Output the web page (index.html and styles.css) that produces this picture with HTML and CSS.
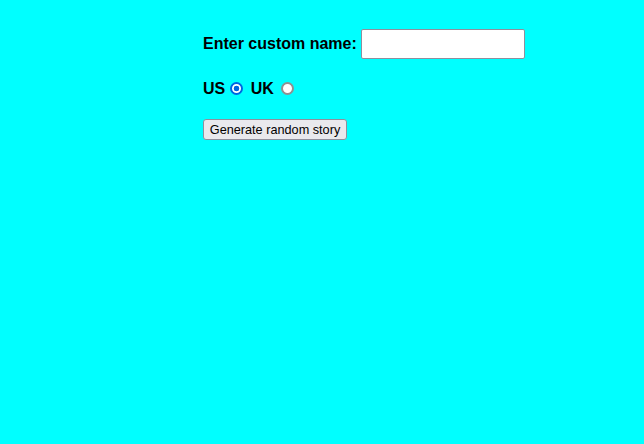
FILE: index.html
```html
<!DOCTYPE html>
<html>
<head>
<meta charset="utf-8">
<link rel="stylesheet" href="styles.css">
</head>
<body>
<main class="page">
  <div class="row">
    <label class="lbl" for="customname">Enter custom name:</label>
    <input class="name" id="customname" type="text">
  </div>
  <div class="row">
    <label class="lbl" for="us">US</label><input class="radio" id="us" type="radio" name="ukus" value="us" checked>
    <label class="lbl" for="uk">UK</label><input class="radio" id="uk" type="radio" name="ukus" value="uk">
  </div>
  <div class="row">
    <button class="randomize">Generate random story</button>
  </div>
</main>
</body>
</html>
```

FILE: styles.css
```css
html, body {
  margin: 0;
  background: #00ffff;
  height: 100%;
}
.page {
  font-family: "Liberation Sans", Arial, sans-serif;
  width: 350px;
  margin-left: 203px;
  padding-top: 29px;
}
.row {
  padding-bottom: 20px;
}
.lbl {
  font-weight: bold;
  font-size: 16px;
}
.name {
  box-sizing: border-box;
  width: 164px;
  height: 30px;
  padding: 5px;
  border: 1px solid #8f8f9d;
  border-radius: 2px;
  background: #fff;
  margin: 0;
  vertical-align: baseline;
}
.radio {
  appearance: none;
  -webkit-appearance: none;
  box-sizing: border-box;
  width: 13px;
  height: 13px;
  margin: 3px 3px 0 5px;
  border: 2px solid #909090;
  border-radius: 50%;
  background: #fff;
  vertical-align: -1px;
}
.radio:checked {
  border-color: #0067e0;
  background: radial-gradient(circle, #0067e0 0 2.6px, #fff 3.1px);
}
#uk {
  margin-left: 7px;
}
.randomize {
  font-family: "Liberation Sans", Arial, sans-serif;
  font-size: 12.7px;
  white-space: nowrap;
  box-sizing: border-box;
  width: 144px;
  height: 21px;
  padding: 1px 4px;
  margin-top: 1px;
  border: 1px solid #8f8f9d;
  border-radius: 3px;
  background: #e9e9ed;
  color: #000;
}
```
